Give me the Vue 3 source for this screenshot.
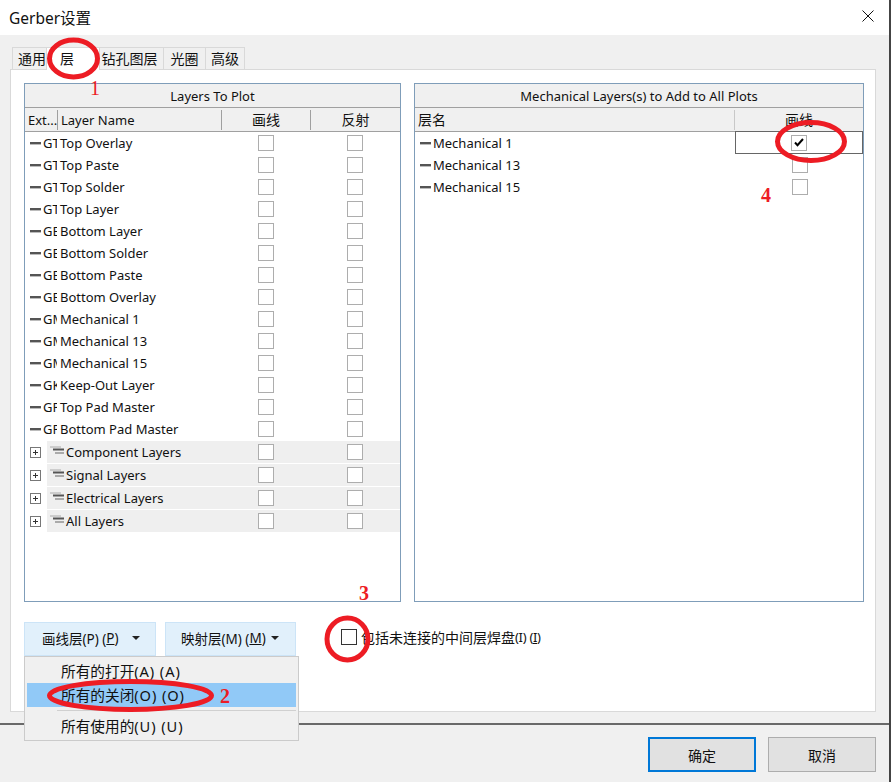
<script setup>
const tabs = [
  { name: '通用', w: 35 },
  { name: '层', w: 53, active: true },
  { name: '钻孔图层', w: 64 },
  { name: '光圈', w: 42 },
  { name: '高级', w: 39 }
]
const layers = [
  ['GTO', 'Top Overlay'], ['GTP', 'Top Paste'], ['GTS', 'Top Solder'], ['GTL', 'Top Layer'],
  ['GBL', 'Bottom Layer'], ['GBS', 'Bottom Solder'], ['GBP', 'Bottom Paste'], ['GBO', 'Bottom Overlay'],
  ['GM1', 'Mechanical 1'], ['GM13', 'Mechanical 13'], ['GM15', 'Mechanical 15'], ['GKO', 'Keep-Out Layer'],
  ['GPT', 'Top Pad Master'], ['GPB', 'Bottom Pad Master']
]
const groups = ['Component Layers', 'Signal Layers', 'Electrical Layers', 'All Layers']
const mech = [
  { name: 'Mechanical 1', on: true },
  { name: 'Mechanical 13' },
  { name: 'Mechanical 15' }
]
</script>

<template>
  <div class="window">
    <header class="titlebar">
      <span class="title">Gerber设置</span>
      <svg class="close" width="12" height="12" viewBox="0 0 12 12"><path d="M.5.5l11 11M11.500.5l-11 11" stroke="#111" stroke-width="1" fill="none" /></svg>
    </header>

    <main class="body">
      <nav class="tabs">
        <span
          v-for="t in tabs"
          :key="t.name"
          class="tab"
          :class="{ active: t.active }"
          :style="{ width: t.w + 'px' }"
        >{{ t.name }}</span>
      </nav>

      <section class="pane">
        <div class="panels">
          <div class="panel">
            <div class="cap">Layers To Plot</div>
            <div class="cols">
              <span class="col c-ext">Ext...</span>
              <span class="col c-name">Layer Name</span>
              <span class="col c-chk cjk">画线</span>
              <span class="col c-chk last cjk">反射</span>
            </div>
            <div v-for="l in layers" :key="l[1]" class="row">
              <span class="ext"><i class="dash"></i><span class="ext-txt">{{ l[0] }}</span></span>
              <span class="lname">{{ l[1] }}</span>
              <span class="cell"><i class="box"></i></span>
              <span class="cell"><i class="box"></i></span>
            </div>
            <div class="groups">
              <div v-for="g in groups" :key="g" class="group">
                <span class="expander">
                  <svg width="11" height="11" viewBox="0 0 11 11"><rect x=".5" y=".5" width="10" height="10" fill="#fff" stroke="#777" /><path d="M3 5.500h5M5.500 3v5" stroke="#333" /></svg>
                </span>
                <span class="gband">
                  <svg class="gicon" width="15" height="10" viewBox="0 0 15 10"><path d="M0 1h11" stroke="#aaa" stroke-width="1" /><path d="M3 3.500h11" stroke="#555" stroke-width="2" /><path d="M5 7h9" stroke="#aaa" stroke-width="2" /></svg>
                  <span class="gname">{{ g }}</span>
                  <span class="cell"><i class="box"></i></span>
                  <span class="cell"><i class="box"></i></span>
                </span>
              </div>
            </div>
          </div>

          <div class="panel">
            <div class="cap">Mechanical Layers(s) to Add to All Plots</div>
            <div class="cols">
              <span class="col c-layer cjk">层名</span>
              <span class="col c-plot cjk">画线</span>
            </div>
            <div v-for="m in mech" :key="m.name" class="row">
              <span class="mname"><i class="dash"></i>{{ m.name }}</span>
              <span class="mcell" :class="{ focused: m.on }">
                <i class="box">
                  <svg v-if="m.on" class="tick" width="10" height="9" viewBox="0 0 10 9"><path d="M1 4.500l2.500 2.700L9 1" stroke="#000" stroke-width="2" fill="none" /></svg>
                </i>
              </span>
            </div>
          </div>
        </div>

        <div class="actions">
          <button class="drop first" type="button">画线层(P) (<u>P</u>)<i class="caret"></i></button>
          <button class="drop second" type="button">映射层(M) (<u>M</u>)<i class="caret"></i></button>
          <label class="include"><i class="box dark"></i>包括未连接的中间层焊盘<span class="suffix">(I) (<u>I</u>)</span></label>
        </div>
      </section>

      <div class="menu">
        <div class="mi">所有的打开<span class="key">(A) (A)</span></div>
        <div class="mi hot">所有的关闭<span class="key">(O) (O)</span></div>
        <div class="sep"></div>
        <div class="mi">所有使用的<span class="key">(U) (U)</span></div>
      </div>
    </main>

    <footer class="footer">
      <button class="btn primary" type="button">确定</button>
      <button class="btn" type="button">取消</button>
    </footer>

    <svg class="marks" width="891" height="782" viewBox="0 0 891 782">
      <g fill="none" stroke="#ed1c24" stroke-width="5">
        <ellipse cx="73.500" cy="58.500" rx="24" ry="18.500" />
        <ellipse cx="130.500" cy="695.500" rx="81" ry="14" />
        <ellipse cx="347.500" cy="639" rx="20.500" ry="21" />
        <ellipse cx="811" cy="141.500" rx="33.500" ry="19" />
      </g>
      <g class="nums" fill="#ed1c24">
        <text class="thin" x="90" y="95">1</text>
        <text x="220" y="703">2</text>
        <text x="359" y="600">3</text>
        <text x="761" y="202">4</text>
      </g>
    </svg>
  </div>
</template>

<style>
body { margin: 0; background: #fff; }
</style>

<style scoped>
.window {
  position: relative;
  width: 891px;
  height: 782px;
  overflow: hidden;
  display: flex;
  flex-direction: column;
  box-sizing: border-box;
  border-right: 2px solid #444;
  font-family: "Noto Sans", "Noto Sans CJK SC", sans-serif;
  font-size: 13px;
  color: #111;
  background: #fff;
}
.titlebar {
  height: 35px;
  flex: none;
  display: flex;
  align-items: center;
  justify-content: space-between;
  padding: 0 15px 0 9px;
  box-sizing: border-box;
}
.title { font-size: 15.500px; }
.close { display: block; margin-top: -3px; }
.body {
  position: relative;
  height: 690px;
  flex: none;
  box-sizing: border-box;
  background: #f0f0f0;
  border-bottom: 2px solid #696969;
  padding: 12px 0 0 10px;
}
.tabs { display: flex; height: 22px; padding-left: 2px; font-size: 14px; }
.tab {
  box-sizing: border-box;
  height: 22px;
  background: #f0f0f0;
  border: 1px solid #d9d9d9;
  border-left-width: 0;
  border-bottom-width: 0;
  text-align: center;
  line-height: 21px;
  white-space: nowrap;
}
.tab:first-child { border-left-width: 1px; padding-left: 5px; text-align: left; }
.tab:nth-child(3) { padding-right: 4px; }
.tab.active {
  position: relative;
  z-index: 1;
  height: 23px;
  background: #fff;
  text-align: left;
  padding-left: 13px;
}
.pane {
  box-sizing: border-box;
  width: 866px;
  height: 643px;
  background: #fff;
  border: 1px solid #d9d9d9;
  padding: 13px 11px 0 13px;
}
.panels { display: flex; gap: 13px; }
.panel {
  box-sizing: border-box;
  height: 519px;
  border: 1px solid #7f9db9;
  background: #fff;
}
.panel:first-child { width: 377px; }
.panel:last-child { width: 450px; }
.cap {
  box-sizing: border-box;
  height: 24px;
  line-height: 24px;
  text-align: center;
  background: #f0f0f0;
  border-bottom: 1px solid #a0a0a0;
}
.cols {
  display: flex;
  height: 24px;
  box-sizing: border-box;
  background: #f0f0f0;
  border-bottom: 1px solid #a0a0a0;
}
.col { box-sizing: border-box; height: 20px; line-height: 20px; border-right: 1px solid #a0a0a0; margin-top: 2px; }
.cjk { font-size: 14px; }
.c-ext { width: 33px; padding-left: 3px; overflow: hidden; white-space: nowrap; }
.c-name { width: 164px; padding-left: 3px; }
.c-chk { width: 89px; text-align: center; }
.c-chk.last { border-right: 0; }
.c-layer { width: 320px; padding-left: 3px; border-right: 1px solid #c8c8c8; }
.c-plot { flex: 1; text-align: center; border-right: 0; }
.row {
  display: flex;
  align-items: center;
  height: 22px;
}
.ext { display: flex; align-items: center; width: 35px; padding-left: 5px; box-sizing: border-box; overflow: hidden; flex: none; }
.ext-txt { width: 14px; margin-left: 2px; overflow: hidden; white-space: nowrap; flex: none; }
.dash {
  display: block;
  flex: none;
  width: 11px;
  height: 2px;
  background: #555;
  border-bottom: 1px solid #bbb;
}
.lname { width: 161px; white-space: nowrap; flex: none; }
.cell { width: 89px; flex: none; display: flex; justify-content: center; }
.box {
  display: block;
  box-sizing: border-box;
  width: 16px;
  height: 16px;
  border: 1px solid #adadad;
  background: #fff;
  position: relative;
}
.box.dark { border-color: #333; margin-right: 4px; flex: none; }
.tick { position: absolute; left: 2px; top: 2px; }
.groups { padding-top: 1px; }
.group { display: flex; align-items: stretch; height: 22px; margin-bottom: 1px; }
.expander { width: 22px; flex: none; display: flex; align-items: center; padding-left: 5px; box-sizing: border-box; }
.gband {
  display: flex;
  align-items: center;
  flex: 1;
  background: #efefef;
  padding-left: 3px;
}
.gicon { flex: none; display: block; margin-top: -3px; }
.gname { width: 155px; flex: none; margin-left: 1px; white-space: nowrap; }
.mname { display: flex; align-items: center; width: 321px; padding-left: 5px; box-sizing: border-box; flex: none; white-space: nowrap; }
.mname .dash { margin-right: 2px; }
.mcell { flex: 1; height: 22px; display: flex; align-items: center; justify-content: center; box-sizing: border-box; }
.mcell.focused { height: 23px; margin-top: -1px; margin-left: -1px; border: 1px solid #666; }
.actions { display: flex; align-items: center; margin-top: 20px; }
.drop {
  box-sizing: border-box;
  height: 34px;
  padding: 0 0 2px;
  background: #e1f0fb;
  border: 1px solid #cce4f7;
  font: inherit;
  font-size: 13.500px;
  color: inherit;
  display: flex;
  align-items: center;
  white-space: pre;
}
.first { width: 132px; padding-left: 17px; margin-right: 9px; }
.second { width: 131px; padding-left: 15px; margin-right: 45px; }
.caret {
  width: 0;
  height: 0;
  border: 4px solid transparent;
  border-top: 4px solid #222;
  border-bottom: 0;
}
.first .caret { margin-left: 13px; }
.second .caret { margin-left: 5px; }
.include { display: flex; align-items: center; margin-top: -5px; font-size: 14px; white-space: pre; }
.suffix { font-size: 13px; letter-spacing: -.3px; }
.menu {
  position: absolute;
  left: 24px;
  top: 621px;
  box-sizing: border-box;
  width: 275px;
  height: 85px;
  background: #f0f0f0;
  border: 1px solid #cbcbcb;
  padding: 2px;
  font-size: 14.670px;
}
.mi { height: 24px; line-height: 24px; padding-left: 34px; white-space: nowrap; }
.mi.hot { background: #91c9f7; }
.key { letter-spacing: .9px; }
.sep { height: 1px; background: #d0d0d0; margin: 3px 0 3px 30px; }
.footer {
  flex: 1;
  background: #f0f0f0;
  display: flex;
  justify-content: flex-end;
  gap: 12px;
  padding: 12px 13px 0 0;
  box-sizing: border-box;
  align-items: flex-start;
}
.btn {
  box-sizing: border-box;
  width: 108px;
  height: 35px;
  background: #e1e1e1;
  border: 1px solid #adadad;
  font: inherit;
  font-size: 14px;
  color: inherit;
  padding: 0;
}
.btn.primary { border: 2px solid #0078d7; }
.marks { position: absolute; left: 0; top: 0; z-index: 2; pointer-events: none; }
.nums { font-family: "Liberation Serif", serif; font-size: 20px; font-weight: 700; }
.nums .thin { font-weight: 400; }
</style>
